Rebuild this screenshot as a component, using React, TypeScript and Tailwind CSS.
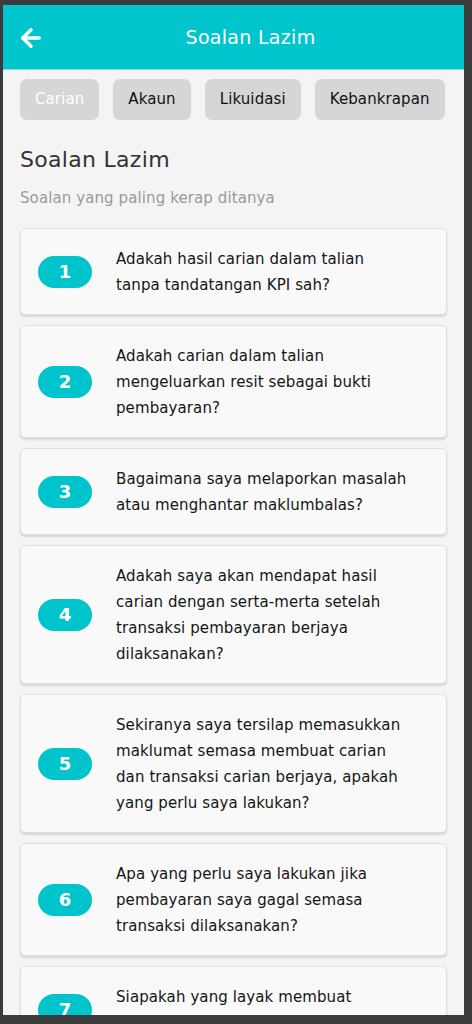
import { ArrowLeft } from "lucide-react";

const tabs = ["Carian", "Akaun", "Likuidasi", "Kebankrapan"];

const faqs: string[][] = [
  ["Adakah hasil carian dalam talian", "tanpa tandatangan KPI sah?"],
  ["Adakah carian dalam talian", "mengeluarkan resit sebagai bukti", "pembayaran?"],
  ["Bagaimana saya melaporkan masalah", "atau menghantar maklumbalas?"],
  [
    "Adakah saya akan mendapat hasil",
    "carian dengan serta-merta setelah",
    "transaksi pembayaran berjaya",
    "dilaksanakan?",
  ],
  [
    "Sekiranya saya tersilap memasukkan",
    "maklumat semasa membuat carian",
    "dan transaksi carian berjaya, apakah",
    "yang perlu saya lakukan?",
  ],
  ["Apa yang perlu saya lakukan jika", "pembayaran saya gagal semasa", "transaksi dilaksanakan?"],
  ["Siapakah yang layak membuat", "carian?"],
];

function FaqCard({ num, lines }: { num: number; lines: string[] }) {
  return (
    <div className="flex shrink-0 items-center rounded-[5px] border border-[#dedede] bg-[#f9f9f9] py-[16.5px] pl-[17px] pr-[20px] shadow-[0_2px_2px_rgba(0,0,0,0.12)]">
      <div className="flex h-[32px] w-[54px] shrink-0 items-center justify-center rounded-full bg-[#00c4cc] text-[18px] font-bold text-white">
        {num}
      </div>
      <p className="ml-[24px] text-[15px] leading-[26px] tracking-[0.1px] text-[#151515]">
        {lines.map((l) => (
          <span key={l} className="block whitespace-nowrap">
            {l}
          </span>
        ))}
      </p>
    </div>
  );
}

export default function App() {
  return (
    <div
      className="flex h-[1024px] w-full flex-col bg-[#3b3b3b] pb-[9px] pl-[3px] pr-[8px] pt-[5px]"
      style={{ fontFamily: "'DejaVu Sans', 'Open Sans', sans-serif" }}
    >
      <div className="flex min-h-0 flex-1 flex-col overflow-hidden bg-[#f4f4f4]">
        <header className="relative flex h-[65px] shrink-0 items-center justify-center border-b border-[#7fdde0] bg-[#00c5cd] pl-[34px]">
          <ArrowLeft className="absolute left-[14px] top-[19px] h-[28px] w-[28px] text-white" strokeWidth={3} />
          <h1 className="text-[19px] tracking-[0.3px] text-white">Soalan Lazim</h1>
        </header>

        <div className="flex shrink-0 gap-[14px] pl-[17px] pt-[9px]">
          {tabs.map((t, i) => (
            <button
              key={t}
              type="button"
              className={
                "h-[41px] rounded-[7px] bg-[#d6d6d6] px-[15px] text-[15px] tracking-[0.1px] " +
                (i === 0 ? "text-white" : "text-[#111]")
              }
            >
              {t}
            </button>
          ))}
        </div>

        <div className="flex flex-col px-[17px]">
          <h2 className="mt-[25px] text-[22px] leading-[30px] tracking-[0.3px] text-[#333]">Soalan Lazim</h2>
          <p className="mt-[13px] text-[15px] leading-[20px] tracking-[0.1px] text-[#9a9a9a]">
            Soalan yang paling kerap ditanya
          </p>

          <div className="mt-[20px] flex flex-col gap-[10px]">
            {faqs.map((lines, i) => (
              <FaqCard key={i} num={i + 1} lines={lines} />
            ))}
          </div>
        </div>
      </div>
    </div>
  );
}
